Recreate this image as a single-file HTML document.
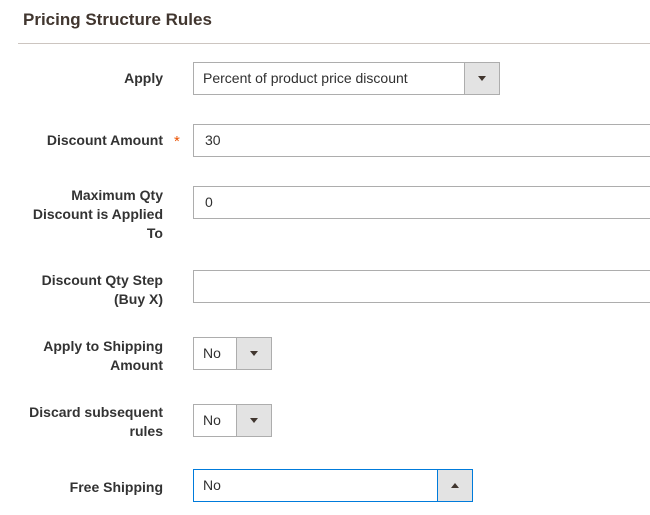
<!DOCTYPE html>
<html><head><meta charset="utf-8"><style>
body{margin:0;width:650px;height:515px;background:#fff;font-family:"Liberation Sans",sans-serif;color:#303030;position:relative;overflow:hidden}
.a{position:absolute}
.h{left:23px;top:10px;font-size:17px;font-weight:bold;color:#41362f}
.line{left:18px;top:43px;width:632px;height:1px;background:#ccc5c0}
.l{right:487px;width:160px;text-align:right;font-size:14px;font-weight:bold;line-height:19px;color:#333}
.f{left:193px;height:31px;border:1px solid #adadad;background:#fff;box-sizing:content-box;font-size:14px;line-height:31px;color:#303030}
.f span{padding-left:9px}
.ar{position:absolute;right:0;top:0;width:34px;height:31px;background:#e3e3e3;border-left:1px solid #adadad}
.ar:after{content:"";position:absolute;left:13px;top:13px;border-left:4px solid transparent;border-right:4px solid transparent;border-top:5px solid #41362f}
.up:after{border-top:0;border-bottom:5px solid #41362f}
</style></head><body>
<div class="a h">Pricing Structure Rules</div>
<div class="a line"></div>

<div class="a l" style="top:69px">Apply</div>
<div class="a f" style="top:62px;width:305px"><span>Percent of product price discount</span><div class="ar"></div></div>

<div class="a l" style="top:131px">Discount Amount</div>
<div class="a" style="left:174px;top:133px;color:#eb5202;font-size:15px">*</div>
<div class="a f" style="top:124px;width:470px"><span style="padding-left:11px">30</span></div>

<div class="a l" style="top:186px">Maximum Qty<br>Discount is Applied<br>To</div>
<div class="a f" style="top:186px;width:470px"><span style="padding-left:11px">0</span></div>

<div class="a l" style="top:271px">Discount Qty Step<br>(Buy X)</div>
<div class="a f" style="top:270px;width:470px"></div>

<div class="a l" style="top:337px">Apply to Shipping<br>Amount</div>
<div class="a f" style="top:337px;width:77px"><span>No</span><div class="ar"></div></div>

<div class="a l" style="top:403px">Discard subsequent<br>rules</div>
<div class="a f" style="top:404px;width:77px"><span>No</span><div class="ar"></div></div>

<div class="a l" style="top:478px">Free Shipping</div>
<div class="a f" style="top:469px;width:278px;border-color:#007bdb"><span>No</span><div class="ar up" style="border-left-color:#007bdb"></div></div>
</body></html>
